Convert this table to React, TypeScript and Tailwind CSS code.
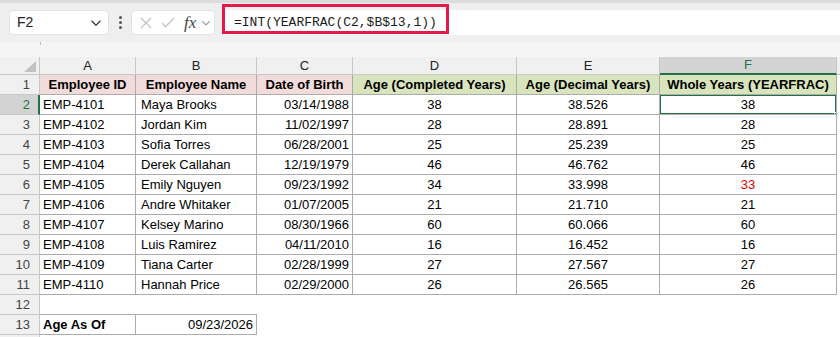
import React from 'react';

// Sheet data, rows 2..11
const rows = [
  { id: 'EMP-4101', name: 'Maya Brooks', dob: '03/14/1988', done: '38', dec: '38.526', whole: '38' },
  { id: 'EMP-4102', name: 'Jordan Kim', dob: '11/02/1997', done: '28', dec: '28.891', whole: '28' },
  { id: 'EMP-4103', name: 'Sofia Torres', dob: '06/28/2001', done: '25', dec: '25.239', whole: '25' },
  { id: 'EMP-4104', name: 'Derek Callahan', dob: '12/19/1979', done: '46', dec: '46.762', whole: '46' },
  { id: 'EMP-4105', name: 'Emily Nguyen', dob: '09/23/1992', done: '34', dec: '33.998', whole: '33' },
  { id: 'EMP-4106', name: 'Andre Whitaker', dob: '01/07/2005', done: '21', dec: '21.710', whole: '21' },
  { id: 'EMP-4107', name: 'Kelsey Marino', dob: '08/30/1966', done: '60', dec: '60.066', whole: '60' },
  { id: 'EMP-4108', name: 'Luis Ramirez', dob: '04/11/2010', done: '16', dec: '16.452', whole: '16' },
  { id: 'EMP-4109', name: 'Tiana Carter', dob: '02/28/1999', done: '27', dec: '27.567', whole: '27' },
  { id: 'EMP-4110', name: 'Hannah Price', dob: '02/29/2000', done: '26', dec: '26.565', whole: '26' },
];

const cell = 'h-5 border-r border-b border-[#acacac] flex items-center px-[3px] whitespace-nowrap overflow-hidden';
const rowHead = 'h-5 border-r border-b border-[#c8c8c8] bg-[#f0f0f0] text-[#444] flex items-center justify-end pr-[9px]';

const Chevron = ({ className }: { className?: string }) => (
  <svg className={className} width="12" height="8" viewBox="0 0 12 8" fill="none" stroke="currentColor" strokeWidth="1.4">
    <path d="M1.5 1.8 6 6.2l4.5-4.4" />
  </svg>
);

export default function App() {
  return (
    <div className="w-[840px] h-[337px] overflow-hidden bg-white text-[13px] text-black" style={{ fontFamily: '"Liberation Sans", Arial, sans-serif' }}>
      {/* formula bar strip */}
      <div className="h-[42px] bg-[#efefef] border-t-[3px] border-[#dcdcdc] flex items-center relative">
        <div className="ml-[9px] w-[100px] h-[25px] bg-white rounded-[4px] border border-[#e2e2e2] flex items-center justify-between pl-[7px] pr-[6px]">
          <span className="text-[14px] text-[#222]">F2</span>
          <Chevron className="text-[#444]" />
        </div>
        <div className="w-[22px] flex flex-col items-center gap-[2px]">
          <span className="w-[3px] h-[3px] rounded-full bg-[#555]" />
          <span className="w-[3px] h-[3px] rounded-full bg-[#555]" />
          <span className="w-[3px] h-[3px] rounded-full bg-[#555]" />
        </div>
        <div className="w-[84px] h-[25px] bg-white rounded-[4px] border border-[#e2e2e2] flex items-center pl-[8px] gap-[9px]">
          <svg width="12" height="12" viewBox="0 0 12 12" stroke="#c4c4c4" strokeWidth="1.3" fill="none">
            <path d="M1 1l10 10M11 1 1 11" />
          </svg>
          <svg width="14" height="11" viewBox="0 0 14 11" stroke="#c4c4c4" strokeWidth="1.3" fill="none">
            <path d="M1 6 4.5 9.8 13 1" />
          </svg>
          <span className="text-[17px] italic text-[#444] leading-none" style={{ fontFamily: '"Liberation Serif", serif' }}>fx</span>
          <Chevron className="text-[#999] -ml-[4px] w-[10px]" />
        </div>
        <div className="ml-[8px] flex-1 h-[25px] bg-white rounded-l-[4px] flex items-center pl-[11px] text-[13px] text-[#1b1b1b]" style={{ fontFamily: '"Liberation Mono", monospace' }}>
          =INT(YEARFRAC(C2,$B$13,1))
        </div>
        {/* highlight around the formula */}
        <div className="absolute left-[222px] top-[1px] w-[227px] h-[30px] border-[3px] border-[#e3194b]" />
      </div>
      <div className="h-[15px] bg-[#f5f5f5] relative">
        <div className="absolute left-[40px] top-0 w-px h-[3px] bg-[#bbb]" />
      </div>

      {/* sheet */}
      <div className="grid grid-cols-[40px_96px_121px_96px_164px_143px_177px_3px]">
        {/* column letters */}
        <div className="h-[18px] bg-[#f0f0f0] border-r border-b border-[#c8c8c8] flex items-end justify-end pr-[3px] pb-[2px]">
          <svg width="12" height="11" viewBox="0 0 12 11"><path d="M12 0v11H0z" fill="#c2c2c2" /></svg>
        </div>
        {['A', 'B', 'C', 'D', 'E'].map((l) => (
          <div key={l} className="h-[18px] bg-[#f0f0f0] border-r border-b border-[#c8c8c8] flex items-center justify-center text-[#222]">{l}</div>
        ))}
        <div className="h-[18px] bg-[#d3d3d3] border-r border-[#c8c8c8] border-b-2 border-b-[#217346] flex items-center justify-center text-[#217346]">F</div>
        <div className="h-[18px] bg-[#f0f0f0] border-b border-[#c8c8c8]" />

        {/* row 1: headers */}
        <div className={rowHead}>1</div>
        <div className={`${cell} bg-[#f2dcdb] font-bold justify-center`}>Employee ID</div>
        <div className={`${cell} bg-[#f2dcdb] font-bold justify-center`}>Employee Name</div>
        <div className={`${cell} bg-[#f2dcdb] font-bold justify-center`}>Date of Birth</div>
        <div className={`${cell} bg-[#d8e4bc] font-bold justify-center`}>Age (Completed Years)</div>
        <div className={`${cell} bg-[#d8e4bc] font-bold justify-center`}>Age (Decimal Years)</div>
        <div className={`${cell} bg-[#d8e4bc] font-bold justify-center`}>Whole Years (YEARFRAC)</div>
        <div className="h-5" />

        {rows.map((r, i) => {
          const n = i + 2;
          const selected = n === 2;
          return (
            <React.Fragment key={r.id}>
              <div className={selected ? 'h-5 border-b border-[#c8c8c8] border-r-2 border-r-[#217346] bg-[#d3d3d3] text-[#217346] flex items-center justify-end pr-[8px]' : rowHead}>{n}</div>
              <div className={cell}>{r.id}</div>
              <div className={`${cell} pl-[5px]`}>{r.name}</div>
              <div className={`${cell} justify-end`}>{r.dob}</div>
              <div className={`${cell} justify-center`}>{r.done}</div>
              <div className={`${cell} justify-center`}>{r.dec}</div>
              <div className={`${cell} justify-center relative ${r.whole === '33' ? 'text-[#e00000]' : ''}`}>
                {r.whole}
                {selected && (
                  <>
                    <div className="absolute -left-px -top-px -right-px -bottom-px border-2 border-[#217346]" />
                    <div className="absolute -right-[4px] -bottom-[4px] w-[6px] h-[6px] bg-[#217346] border border-white" />
                  </>
                )}
              </div>
              <div className="h-5" />
            </React.Fragment>
          );
        })}

        {/* row 12 */}
        <div className={rowHead}>12</div>
        <div className="h-5 col-span-2 border-b border-[#acacac]" />
        <div className="h-5 col-span-5" />

        {/* row 13 */}
        <div className={rowHead}>13</div>
        <div className={`${cell} font-bold`}>Age As Of</div>
        <div className={`${cell} justify-end`}>09/23/2026</div>
        <div className="h-5 col-span-5" />

        {/* row 14, only its top edge shows */}
        <div className={rowHead} />
        <div className="h-5 col-span-7" />
      </div>
    </div>
  );
}
